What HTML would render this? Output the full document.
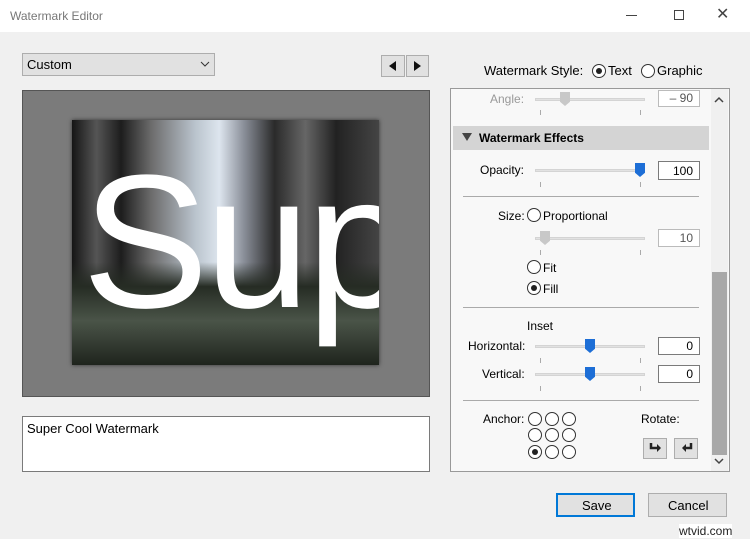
<!DOCTYPE html>
<html><head><style>
*{margin:0;padding:0;box-sizing:border-box}
body{width:750px;height:539px;background:#f0f0f0;font-family:"Liberation Sans",sans-serif;font-size:12px;color:#000;position:relative;overflow:hidden}
.a{position:absolute}
.tb{top:0;left:0;width:750px;height:32px;background:#fff}
.tick{position:absolute;width:1px;height:5px;background:#aaa}
.trk{position:absolute;height:3px;background:#e2e2e2;border:1px solid #d4d4d4}
.box{position:absolute;background:#fff;border:1px solid #7a7a7a;text-align:right;padding-right:6px;font-size:12px;line-height:18px}
.rad{position:absolute;width:14px;height:14px;border:1px solid #333;border-radius:50%;background:#fff}
.rad.on::after{content:"";position:absolute;left:3px;top:3px;width:6px;height:6px;border-radius:50%;background:#222}
.thumb{position:absolute;width:10px;height:14px;background:#1d6ed6;clip-path:polygon(0 0,100% 0,100% 70%,50% 100%,0 70%)}
.gthumb{position:absolute;width:10px;height:14px;background:#c8c8c8;clip-path:polygon(0 0,100% 0,100% 70%,50% 100%,0 70%)}
.hr{position:absolute;left:463px;width:236px;height:1px;background:#aaa}
.lbl{position:absolute;font-size:12px}
</style></head><body>
<div class="a tb"></div>
<div class="a" style="left:10px;top:9px;color:#777;font-size:12px">Watermark Editor</div>
<div class="a" style="left:626px;top:15px;width:11px;height:1px;background:#444"></div>
<div class="a" style="left:674px;top:10px;width:10px;height:10px;border:1px solid #444"></div>
<div class="a" style="left:716px;top:4px;font-size:16px;color:#444">✕</div>

<div class="a" style="left:22px;top:53px;width:193px;height:23px;background:#e1e1e1;border:1px solid #adadad"></div>
<div class="a" style="left:27px;top:57px;font-size:13px">Custom</div>
<svg class="a" style="left:200px;top:60px" width="10" height="8"><path d="M1 2 L5 6 L9 2" stroke="#333" fill="none"/></svg>
<div class="a" style="left:381px;top:55px;width:24px;height:22px;background:#e1e1e1;border:1px solid #adadad"></div>
<div class="a" style="left:406px;top:55px;width:23px;height:22px;background:#e1e1e1;border:1px solid #adadad"></div>
<svg class="a" style="left:388px;top:61px" width="10" height="10"><path d="M8 0 L1 5 L8 10Z" fill="#111"/></svg>
<svg class="a" style="left:413px;top:61px" width="10" height="10"><path d="M1 0 L8 5 L1 10Z" fill="#111"/></svg>

<div class="a" style="left:484px;top:63px;font-size:13px">Watermark Style:</div>
<div class="rad on" style="left:592px;top:64px"></div>
<div class="a" style="left:608px;top:63px;font-size:13px">Text</div>
<div class="rad" style="left:641px;top:64px"></div>
<div class="a" style="left:657px;top:63px;font-size:13px">Graphic</div>

<div class="a" style="left:22px;top:90px;width:408px;height:307px;background:#7b7b7b;border:1px solid #555"></div>
<div class="a" style="left:72px;top:120px;width:307px;height:245px;overflow:hidden;background:
linear-gradient(to bottom,rgba(0,0,0,0) 58%,#262c24 68%,#4a5448 82%,#1f241d 100%),
linear-gradient(to right,#151515 0%,#555 8%,#1d1d1d 16%,#6d6d6d 26%,#b9c3cc 40%,#dde5ee 48%,#8a8f99 56%,#2a2a2a 66%,#666 76%,#222 86%,#444 100%);box-shadow:0 0 4px #333">
<div style="position:absolute;left:10px;top:-8px;font-size:190px;color:#fff;font-family:'Liberation Sans',sans-serif;letter-spacing:-4px;line-height:260px">Sup</div>
</div>

<div class="a" style="left:22px;top:416px;width:408px;height:56px;background:#fff;border:1px solid #7a7a7a"></div>
<div class="a" style="left:27px;top:421px;font-size:13px">Super Cool Watermark</div>

<div class="a" style="left:450px;top:88px;width:280px;height:384px;background:#f8f8f8;border:1px solid #999"></div>
<div class="a" style="left:711px;top:89px;width:17px;height:382px;background:#f0f0f0"></div>
<div class="a" style="left:712px;top:272px;width:15px;height:183px;background:#a8a8a8"></div>
<svg class="a" style="left:714px;top:96px" width="10" height="7"><path d="M1 6 L5 2 L9 6" stroke="#444" fill="none" stroke-width="1.5"/></svg>
<svg class="a" style="left:714px;top:458px" width="10" height="7"><path d="M1 1 L5 5 L9 1" stroke="#444" fill="none" stroke-width="1.5"/></svg>

<div class="lbl" style="left:490px;top:92px;color:#999">Angle:</div>
<div class="trk" style="left:535px;top:98px;width:110px"></div>
<div class="gthumb" style="left:560px;top:92px"></div>
<div class="tick" style="left:540px;top:110px"></div><div class="tick" style="left:640px;top:110px"></div>
<div class="box" style="left:658px;top:90px;width:42px;color:#555;border-color:#bbb;height:17px;line-height:15px">– 90</div>

<div class="a" style="left:453px;top:126px;width:256px;height:24px;background:#d4d4d4"></div>
<svg class="a" style="left:462px;top:133px" width="10" height="9"><path d="M0 0 L10 0 L5 8Z" fill="#444"/></svg>
<div class="a" style="left:479px;top:131px;font-weight:bold;font-size:12px">Watermark Effects</div>

<div class="lbl" style="left:480px;top:163px">Opacity:</div>
<div class="trk" style="left:535px;top:169px;width:110px"></div>
<div class="thumb" style="left:635px;top:163px"></div>
<div class="tick" style="left:540px;top:182px"></div><div class="tick" style="left:640px;top:182px"></div>
<div class="box" style="left:658px;top:161px;width:42px;height:19px">100</div>
<div class="hr" style="top:196px"></div>

<div class="lbl" style="left:498px;top:209px">Size:</div>
<div class="rad" style="left:527px;top:208px"></div>
<div class="lbl" style="left:543px;top:209px">Proportional</div>
<div class="trk" style="left:535px;top:237px;width:110px"></div>
<div class="gthumb" style="left:540px;top:231px"></div>
<div class="tick" style="left:540px;top:250px"></div><div class="tick" style="left:640px;top:250px"></div>
<div class="box" style="left:658px;top:229px;width:42px;height:18px;color:#555;border-color:#bbb;line-height:16px">10</div>
<div class="rad" style="left:527px;top:260px"></div><div class="lbl" style="left:543px;top:261px">Fit</div>
<div class="rad on" style="left:527px;top:281px"></div><div class="lbl" style="left:543px;top:282px">Fill</div>
<div class="hr" style="top:307px"></div>

<div class="lbl" style="left:527px;top:319px">Inset</div>
<div class="lbl" style="left:468px;top:339px">Horizontal:</div>
<div class="trk" style="left:535px;top:345px;width:110px"></div>
<div class="thumb" style="left:585px;top:339px"></div>
<div class="tick" style="left:540px;top:358px"></div><div class="tick" style="left:640px;top:358px"></div>
<div class="box" style="left:658px;top:337px;width:42px;height:18px;line-height:16px">0</div>
<div class="lbl" style="left:482px;top:367px">Vertical:</div>
<div class="trk" style="left:535px;top:373px;width:110px"></div>
<div class="thumb" style="left:585px;top:367px"></div>
<div class="tick" style="left:540px;top:386px"></div><div class="tick" style="left:640px;top:386px"></div>
<div class="box" style="left:658px;top:365px;width:42px;height:18px;line-height:16px">0</div>
<div class="hr" style="top:400px"></div>

<div class="lbl" style="left:483px;top:412px">Anchor:</div>
<div class="rad" style="left:528px;top:412px"></div><div class="rad" style="left:545px;top:412px"></div><div class="rad" style="left:562px;top:412px"></div>
<div class="rad" style="left:528px;top:428px"></div><div class="rad" style="left:545px;top:428px"></div><div class="rad" style="left:562px;top:428px"></div>
<div class="rad on" style="left:528px;top:445px"></div><div class="rad" style="left:545px;top:445px"></div><div class="rad" style="left:562px;top:445px"></div>
<div class="lbl" style="left:641px;top:412px">Rotate:</div>
<div class="a" style="left:643px;top:438px;width:24px;height:21px;background:#e1e1e1;border:1px solid #adadad"></div>
<div class="a" style="left:674px;top:438px;width:24px;height:21px;background:#e1e1e1;border:1px solid #adadad"></div>
<svg class="a" style="left:649px;top:442px" width="14" height="13"><path d="M2 1 V6 H9" stroke="#222" stroke-width="2.5" fill="none"/><path d="M8 2 L12 6 L8 10Z" fill="#222"/></svg>
<svg class="a" style="left:680px;top:442px" width="14" height="13"><path d="M11 1 V6 H5" stroke="#222" stroke-width="2.5" fill="none"/><path d="M6 2 L2 6 L6 10Z" fill="#222"/></svg>

<div class="a" style="left:556px;top:493px;width:79px;height:24px;background:#e1e1e1;border:2px solid #0078d7"></div>
<div class="a" style="left:582px;top:498px;font-size:13px">Save</div>
<div class="a" style="left:648px;top:493px;width:79px;height:24px;background:#e1e1e1;border:1px solid #adadad"></div>
<div class="a" style="left:668px;top:498px;font-size:13px">Cancel</div>
<div class="a" style="left:679px;top:524px;font-size:12px;color:#222;background:#fff">wtvid.com</div>
</body></html>
